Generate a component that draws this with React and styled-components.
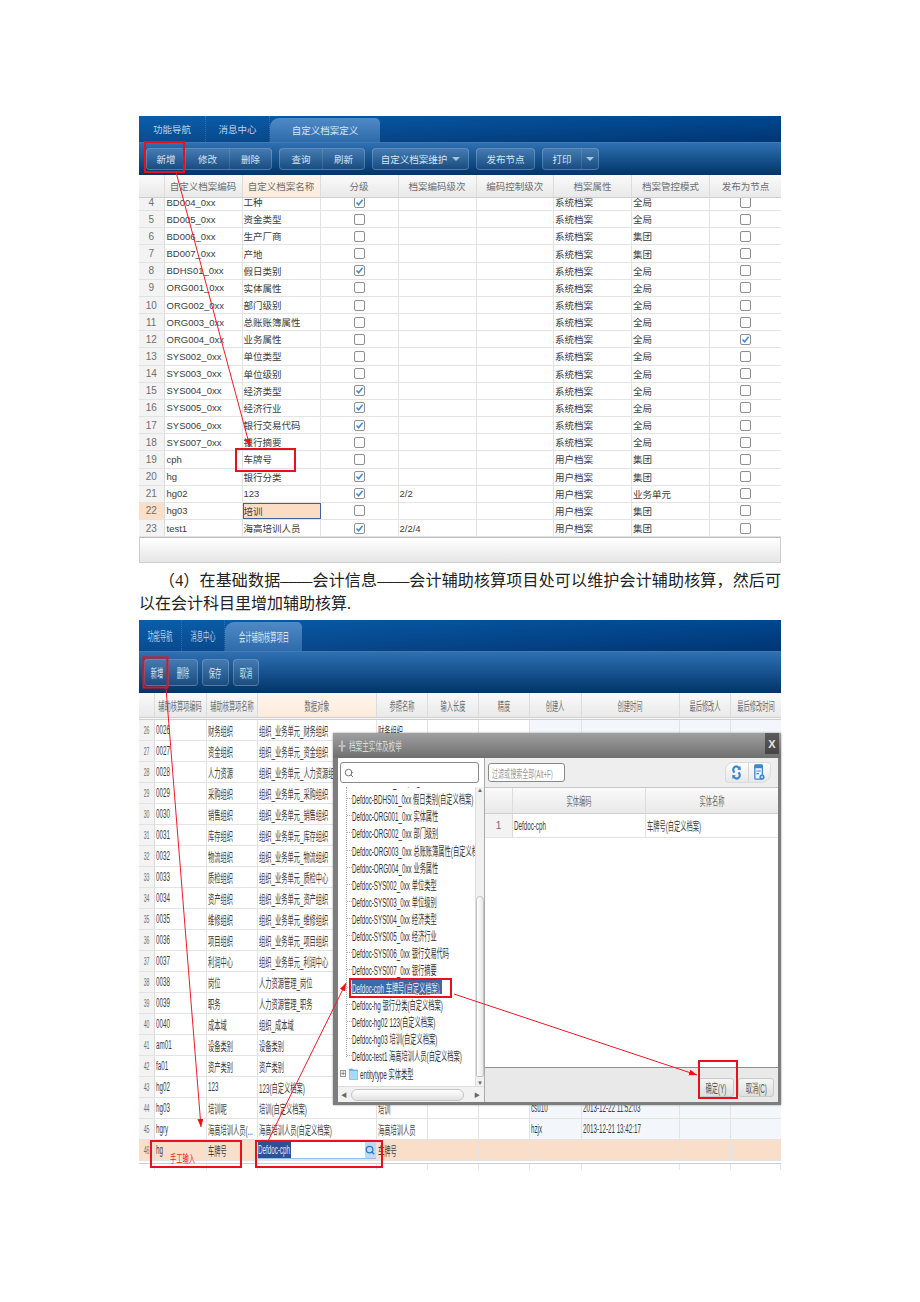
import styled, { createGlobalStyle } from "styled-components";
import { Search } from "lucide-react";

const GlobalStyle = createGlobalStyle`
  html, body {
    margin: 0;
    padding: 0;
    background: #fff;
  }
  * {
    box-sizing: border-box;
  }
`;

const SANS = `"Liberation Sans", "Noto Sans CJK SC", sans-serif`;

const Page = styled.div`
  position: relative;
  width: 920px;
  height: 1302px;
  padding: 116px 139px 0;
  overflow: hidden;
  font-family: ${SANS};
`;

const Panel = styled.section`
  position: relative;
  width: 642px;
  font-size: ${(p) => p.$size || 9.5}px;
`;

// second screenshot is squashed horizontally in the document
const Sq = styled.span`
  display: inline-block;
  flex-shrink: 0;
  white-space: nowrap;
  transform: scaleX(${(p) => p.$x || 0.52});
  transform-origin: ${(p) => (p.$left ? "left center" : "center")};
`;

const TabStrip = styled.div`
  display: flex;
  align-items: flex-end;
  height: ${(p) => p.$h}px;
  background-image:
    linear-gradient(90deg, rgba(30, 105, 180, 0.35), rgba(0, 40, 100, 0.35)),
    linear-gradient(180deg, #0058a6 0%, #003c7c 100%);
`;

const Tab = styled.div`
  display: flex;
  align-items: center;
  justify-content: center;
  width: ${(p) => p.$w}px;
  height: 100%;
  color: #b9d3ea;
  border-right: 1px dotted rgba(255, 255, 255, 0.16);
`;

const ActiveTab = styled.div`
  display: flex;
  align-items: center;
  justify-content: center;
  width: ${(p) => p.$w}px;
  height: ${(p) => p.$h}px;
  color: #d6e7f5;
  background: linear-gradient(180deg, #4f8ac6 0%, #2e6bab 100%);
  border-radius: 9px 5px 0 0;
`;

const Toolbar = styled.div`
  display: flex;
  align-items: center;
  gap: ${(p) => p.$gap || 7}px;
  height: ${(p) => p.$h}px;
  padding-left: ${(p) => p.$pad}px;
  background: linear-gradient(180deg, #2f70b2 0%, #17548f 48%, #023468 100%);
  border-top: 1px solid #3f7ab5;
`;

const BtnGroup = styled.div`
  display: flex;
  height: ${(p) => p.$h}px;
  background: linear-gradient(180deg, rgba(255, 255, 255, 0.14), rgba(255, 255, 255, 0.07));
  border: 1px solid rgba(255, 255, 255, 0.2);
  border-radius: 4px;
`;

const Btn = styled.div`
  display: flex;
  align-items: center;
  justify-content: center;
  gap: 5px;
  width: ${(p) => p.$w}px;
  color: #d4e4f2;
  border-right: 1px solid rgba(255, 255, 255, 0.12);
  &:last-child {
    border-right: 0;
  }
`;

const Caret = styled.i`
  width: 0;
  height: 0;
  border-left: 4px solid transparent;
  border-right: 4px solid transparent;
  border-top: 4px solid #a9c6df;
`;

const HeaderRow = styled.div`
  display: grid;
  grid-template-columns: ${(p) => p.$cols};
  height: ${(p) => p.$h}px;
  background: linear-gradient(180deg, #fafafa 0%, #e9e9e9 100%);
  border-bottom: ${(p) => p.$bottom || "1px solid #cfcfcf"};
`;

const HeaderCell = styled.div`
  display: flex;
  align-items: center;
  justify-content: center;
  overflow: hidden;
  white-space: nowrap;
  color: #6e6e6e;
  background: ${(p) => (p.$hot ? "linear-gradient(180deg, #fff5ec, #fcebdc)" : "none")};
  border-right: 1px solid #dcdcdc;
  &:last-child {
    border-right: 0;
  }
`;

const GridBody = styled.div`
  height: ${(p) => p.$h}px;
  overflow: hidden;
  background: #fff;
`;

const Row = styled.div`
  display: grid;
  grid-template-columns: ${(p) => p.$cols};
  height: ${(p) => p.$h}px;
  margin-top: ${(p) => p.$shift || 0}px;
  background: ${(p) => (p.$hot ? "#f9dfca" : "#fff")};
  border-bottom: 1px solid #e3e3e3;
  color: #3c3c3c;
`;

const Num = styled.div`
  display: flex;
  align-items: center;
  justify-content: center;
  overflow: hidden;
  color: #6f6f6f;
  background: ${(p) => (p.$hot ? "#fbdfc9" : "#f3f3f3")};
  border-right: 1px solid #dcdcdc;
  font-size: 10px;
`;

const Cell = styled.div`
  display: flex;
  align-items: center;
  justify-content: ${(p) => (p.$center ? "center" : "flex-start")};
  padding-left: ${(p) => (p.$center ? 0 : p.$pad ?? 1)}px;
  overflow: hidden;
  white-space: nowrap;
  background: ${(p) => (p.$tint ? "#f3f6fb" : "transparent")};
  border-right: 1px solid #e3e3e3;
  &:last-child {
    border-right: 0;
  }
`;

const EditingCell = styled(Cell)`
  padding-left: 0;
  background: #fbdcc5;
  border: 1px solid #3f5f9e;
`;

const Box = styled.span`
  display: flex;
  align-items: center;
  justify-content: center;
  width: 11px;
  height: 11px;
  background: #fff;
  border: 1px solid #8f8f8f;
  border-radius: 2px;
`;

const GridFooter = styled.div`
  height: 26px;
  background: linear-gradient(180deg, #ffffff 0%, #e6e6e6 100%);
  border: 1px solid #cfcfcf;
  border-top: 1px solid #bdbdbd;
`;

const Para = styled.p`
  margin: 6px 0 5px;
  font-family: "Liberation Serif", "Noto Sans CJK SC", serif;
  font-size: 16px;
  line-height: 23px;
  color: #222;
  text-align: justify;
  text-indent: 20px;
`;

const InputCell = styled.div`
  display: flex;
  flex: 1;
  align-items: stretch;
  height: 17px;
  background: #fff;
  border-bottom: 1px solid #8fbdec;
`;

const Selected = styled.span`
  display: flex;
  align-items: center;
  width: 33px;
  background: #2f4f9a;
  color: #dfe8f7;
`;

const Lookup = styled.span`
  display: flex;
  align-items: center;
  justify-content: center;
  width: 11px;
  margin-left: auto;
  background: #bcd9f6;
  color: #2a78c8;
`;

const GridEnd = styled.div`
  display: grid;
  grid-template-columns: ${(p) => p.$cols};
  height: 7px;
  margin-top: 2px;
  border-top: 1px solid #cfcfcf;
`;

const EndTick = styled.div`
  border-right: 1px solid #e6e6e6;
`;

/* dialog floats over the second grid */
const Dialog = styled.div`
  position: absolute;
  top: 113px;
  left: 194px;
  display: flex;
  flex-direction: column;
  width: 448px;
  height: 372px;
  padding: 0 3px 3px 5px;
  background: #7d7d7d;
  box-shadow: 0 0 2px rgba(0, 0, 0, 0.4);
`;

const DialogTitle = styled.div`
  display: flex;
  align-items: center;
  gap: 3px;
  height: 25px;
  margin: 0 -3px 0 -5px;
  padding-left: 5px;
  color: #dcdcdc;
  font-size: 12px;
  background: linear-gradient(180deg, #a0a0a0 0%, #6f6f6f 100%);
`;

const CloseBtn = styled.span`
  display: flex;
  align-items: center;
  justify-content: center;
  width: 14px;
  height: 21px;
  margin: 0 2px 4px auto;
  color: #e6e6e6;
  font-size: 11px;
  font-weight: 700;
  background: linear-gradient(180deg, #5c5c5c, #444);
`;

const DialogBody = styled.div`
  display: flex;
  flex: 1;
  min-height: 0;
  background: #e9e9e9;
`;

const LeftPane = styled.div`
  display: flex;
  flex-direction: column;
  width: 147px;
  background: #fff;
  border-right: 1px solid #aaa;
`;

const SearchRow = styled.div`
  height: 29px;
  padding: 4px 5px 4px 2px;
`;

const SearchBox = styled.div`
  display: flex;
  align-items: center;
  height: 21px;
  padding-left: 3px;
  color: #777;
  background: #fff;
  border: 1px solid #8a8a8a;
  border-radius: 3px;
`;

const TreeWrap = styled.div`
  display: flex;
  flex: 1;
  min-height: 0;
`;

const Tree = styled.div`
  position: relative;
  flex: 1;
  overflow: hidden;
  padding-top: 2px;
  font-size: 12px;
  color: #333;
`;

const Guide = styled.i`
  position: absolute;
  top: 0;
  left: 8px;
  height: 270px;
  border-left: 1px dotted #aaa;
`;

const TreeItem = styled.div`
  display: flex;
  align-items: center;
  height: 17.13px;
  margin-top: ${(p) => p.$shift || 0}px;
  padding-left: 9px;
  &::before {
    content: "";
    flex-shrink: 0;
    width: 5px;
    border-top: 1px dotted #aaa;
  }
`;

const TreeLabel = styled.span`
  display: flex;
  align-items: center;
  width: ${(p) => (p.$on ? "90px" : "auto")};
  height: 14px;
  color: ${(p) => (p.$on ? "#e3ebf6" : "inherit")};
  background: ${(p) => (p.$on ? "#3c6aa6" : "transparent")};
`;

const RootItem = styled.div`
  display: flex;
  align-items: center;
  gap: 2px;
  height: 18px;
  padding-left: 2px;
`;

const Plus = styled.span`
  display: flex;
  align-items: center;
  justify-content: center;
  width: 6px;
  height: 7px;
  margin-right: 1px;
  font-size: 7px;
  line-height: 1;
  color: #555;
  background: #eee;
  border: 1px solid #999;
`;

const VScroll = styled.div`
  display: flex;
  flex-direction: column;
  align-items: center;
  justify-content: space-between;
  width: 9px;
  color: #666;
  font-size: 6px;
  background: #f1f1f1;
  border-left: 1px solid #ddd;
`;

const VThumb = styled.div`
  flex: 1;
  width: 100%;
  margin: 103px 0 3px;
  background: linear-gradient(90deg, #fff, #e8e8e8);
  border: 1px solid #c4c4c4;
  border-radius: 6px 6px 3px 3px;
`;

const HScroll = styled.div`
  display: flex;
  align-items: center;
  height: 16px;
  padding: 0 3px;
  color: #666;
  font-size: 6px;
  background: #f1f1f1;
  border-top: 1px solid #ddd;
`;

const HThumb = styled.div`
  width: 113px;
  height: 12px;
  margin: 0 10px 0 4px;
  background: linear-gradient(180deg, #fff, #e2e2e2);
  border: 1px solid #c4c4c4;
  border-radius: 6px;
`;

const RightPane = styled.div`
  display: flex;
  flex: 1;
  flex-direction: column;
  min-width: 0;
`;

const RightBar = styled.div`
  display: flex;
  align-items: center;
  justify-content: space-between;
  height: 30px;
  padding: 0 7px 0 3px;
  background: #eee;
  border-bottom: 1px solid #c6c6c6;
`;

const FilterBox = styled.div`
  display: flex;
  align-items: center;
  width: 77px;
  height: 19px;
  padding-left: 3px;
  color: #999;
  background: #fff;
  border: 1px solid #8a8a8a;
  border-radius: 3px;
  font-size: 11px;
`;

const IconGroup = styled.div`
  display: flex;
  width: 46px;
  height: 21px;
  background: linear-gradient(180deg, #fdfdfd, #e8e8e8);
  border: 1px solid #dcdcdc;
  border-radius: 8px 3px 10px 3px;
`;

const IconCell = styled.span`
  display: flex;
  flex: 1;
  align-items: center;
  justify-content: center;
  border-right: 1px solid #d6d6d6;
  &:last-child {
    border-right: 0;
  }
`;

const EntityBody = styled.div`
  flex: 1;
  background: #fff;
  font-size: 12px;
`;

const DialogActions = styled.div`
  display: flex;
  justify-content: flex-end;
  align-items: center;
  gap: 4px;
  height: 35px;
  padding: 4px 4px 0 0;
  background: #e9e9e9;
  border-top: 1px solid #8f8f8f;
`;

const ActionBtn = styled.div`
  display: flex;
  align-items: center;
  justify-content: center;
  width: 36px;
  height: 19px;
  color: #555;
  font-size: 12px;
  background: linear-gradient(180deg, #f6f6f6, #dedede);
  border: 1px solid #c9c9c9;
  border-radius: 3px;
`;

const Overlay = styled.svg`
  position: absolute;
  top: 0;
  left: 0;
  pointer-events: none;
`;

const HandNote = styled.span`
  position: absolute;
  left: 170px;
  top: 1150px;
  color: #ee2222;
  font-size: 11px;
`;

const COLS_A = "25.5px 78px 78px 78px 78px 77.5px 78px 78px 1fr";
const COLS_B = "16px 51.5px 51.5px 118.5px 51.5px 51px 51px 51.5px 98px 51px 1fr";
const COLS_C = "28px 133px 1fr";

const rowsA = [
  [4, "BD004_0xx", "工种", 1, "", "系统档案", "全局", 0],
  [5, "BD005_0xx", "资金类型", 0, "", "系统档案", "全局", 0],
  [6, "BD006_0xx", "生产厂商", 0, "", "系统档案", "集团", 0],
  [7, "BD007_0xx", "产地", 0, "", "系统档案", "集团", 0],
  [8, "BDHS01_0xx", "假日类别", 1, "", "系统档案", "全局", 0],
  [9, "ORG001_0xx", "实体属性", 0, "", "系统档案", "全局", 0],
  [10, "ORG002_0xx", "部门级别", 0, "", "系统档案", "全局", 0],
  [11, "ORG003_0xx", "总账账簿属性", 0, "", "系统档案", "全局", 0],
  [12, "ORG004_0xx", "业务属性", 0, "", "系统档案", "全局", 1],
  [13, "SYS002_0xx", "单位类型", 0, "", "系统档案", "全局", 0],
  [14, "SYS003_0xx", "单位级别", 0, "", "系统档案", "全局", 0],
  [15, "SYS004_0xx", "经济类型", 1, "", "系统档案", "全局", 0],
  [16, "SYS005_0xx", "经济行业", 1, "", "系统档案", "全局", 0],
  [17, "SYS006_0xx", "银行交易代码", 1, "", "系统档案", "全局", 0],
  [18, "SYS007_0xx", "银行摘要", 0, "", "系统档案", "全局", 0],
  [19, "cph", "车牌号", 0, "", "用户档案", "集团", 0],
  [20, "hg", "银行分类", 1, "", "用户档案", "集团", 0],
  [21, "hg02", "123", 1, "2/2", "用户档案", "业务单元", 0],
  [22, "hg03", "培训", 0, "", "用户档案", "集团", 0],
  [23, "test1", "海高培训人员", 1, "2/2/4", "用户档案", "集团", 0],
];

const rowsB = [
  [26, "0026", "财务组织", "组织_业务单元_财务组织", "财务组织"],
  [27, "0027", "资金组织", "组织_业务单元_资金组织"],
  [28, "0028", "人力资源", "组织_业务单元_人力资源组织"],
  [29, "0029", "采购组织", "组织_业务单元_采购组织"],
  [30, "0030", "销售组织", "组织_业务单元_销售组织"],
  [31, "0031", "库存组织", "组织_业务单元_库存组织"],
  [32, "0032", "物流组织", "组织_业务单元_物流组织"],
  [33, "0033", "质检组织", "组织_业务单元_质检中心"],
  [34, "0034", "资产组织", "组织_业务单元_资产组织"],
  [35, "0035", "维修组织", "组织_业务单元_维修组织"],
  [36, "0036", "项目组织", "组织_业务单元_项目组织"],
  [37, "0037", "利润中心", "组织_业务单元_利润中心"],
  [38, "0038", "岗位", "人力资源管理_岗位"],
  [39, "0039", "职务", "人力资源管理_职务"],
  [40, "0040", "成本域", "组织_成本域"],
  [41, "am01", "设备类别", "设备类别"],
  [42, "fa01", "资产类别", "资产类别"],
  [43, "hg02", "123", "123(自定义档案)"],
  [44, "hg03", "培训呢", "培训(自定义档案)", "培训", "csu10", "2013-12-22 11:52:03"],
  [45, "hgry", "海高培训人员(...", "海高培训人员(自定义档案)", "海高培训人员", "hzjx", "2013-12-21 13:42:17"],
];

const headersA = ["", "自定义档案编码", "自定义档案名称", "分级", "档案编码级次", "编码控制级次", "档案属性", "档案管控模式", "发布为节点"];
const headersB = ["", "辅助核算项编码", "辅助核算项名称", "数据对象", "参照名称", "输入长度", "精度", "创建人", "创建时间", "最后修改人", "最后修改时间"];

const treeItems = [
  "Defdoc-BDHS01_0xx 假日类别(自定义档案)",
  "Defdoc-ORG001_0xx 实体属性",
  "Defdoc-ORG002_0xx 部门级别",
  "Defdoc-ORG003_0xx 总账账簿属性(自定义档案)",
  "Defdoc-ORG004_0xx 业务属性",
  "Defdoc-SYS002_0xx 单位类型",
  "Defdoc-SYS003_0xx 单位级别",
  "Defdoc-SYS004_0xx 经济类型",
  "Defdoc-SYS005_0xx 经济行业",
  "Defdoc-SYS006_0xx 银行交易代码",
  "Defdoc-SYS007_0xx 银行摘要",
  "Defdoc-cph 车牌号(自定义档案)",
  "Defdoc-hg 银行分类(自定义档案)",
  "Defdoc-hg02 123(自定义档案)",
  "Defdoc-hg03 培训(自定义档案)",
  "Defdoc-test1 海高培训人员(自定义档案)",
];

function CheckBox({ on }) {
  return (
    <Box>
      {on ? (
        <svg width="9" height="9" viewBox="0 0 9 9">
          <path d="M1.5 4.6 L3.6 6.8 L7.6 1.8" fill="none" stroke="#3f86d8" strokeWidth="1.5" />
        </svg>
      ) : null}
    </Box>
  );
}

function RefreshGlyph() {
  return (
    <svg width="9" height="17" viewBox="0 0 9 17">
      <path d="M7.5 5 C7 2.4 3.6 1.6 2 3.6 C0.9 5 1.2 7 2.4 8.6" fill="none" stroke="#3d88cc" strokeWidth="2.2" />
      <path d="M5.2 5.6 L8.8 6.2 L8.4 1.8 Z" fill="#3d88cc" />
      <path d="M1.5 12 C2 14.6 5.4 15.4 7 13.4 C8.1 12 7.8 10 6.6 8.4" fill="none" stroke="#3d88cc" strokeWidth="2.2" />
      <path d="M3.8 11.4 L0.2 10.8 L0.6 15.2 Z" fill="#3d88cc" />
    </svg>
  );
}

function DocGlyph() {
  return (
    <svg width="11" height="17" viewBox="0 0 11 17">
      <rect x="0.8" y="0.8" width="7.6" height="14.4" rx="1" fill="#eaf3fb" stroke="#3d88cc" strokeWidth="1.3" />
      <rect x="0.8" y="0.8" width="7.6" height="3.4" fill="#3d88cc" />
      <path d="M2.4 7 H6.8 M2.4 9.6 H5" stroke="#3d88cc" strokeWidth="1.2" />
      <circle cx="8" cy="13" r="2.6" fill="#3d88cc" />
      <circle cx="8" cy="13" r="0.9" fill="#eaf3fb" />
    </svg>
  );
}

function FolderGlyph() {
  return (
    <svg width="9" height="13" viewBox="0 0 9 13">
      <path d="M0.5 2 H3.5 L4.5 3 H8.5 V12.5 H0.5 Z" fill="#6db6ef" stroke="#5a9fd6" strokeWidth="0.6" />
      <rect x="0.5" y="4" width="8" height="8.5" fill="#a9d8fa" />
    </svg>
  );
}

function PinGlyph() {
  return (
    <svg width="8" height="12" viewBox="0 0 8 12">
      <path d="M4 0.5 V11.5 M0.5 6 H7.5" stroke="#bdbdbd" strokeWidth="2" />
    </svg>
  );
}

function Annotations() {
  return (
    <Overlay width="920" height="1302" viewBox="0 0 920 1302">
      <defs>
        <marker id="head" markerWidth="10" markerHeight="10" refX="8" refY="3" orient="auto">
          <path d="M0 0 L8 3 L0 6 Z" fill="#f01010" />
        </marker>
      </defs>
      <g fill="none" stroke="#e8101c" strokeWidth="2">
        <rect x="145" y="142" width="39" height="30" />
        <rect x="236" y="449" width="59" height="22" />
        <rect x="143.5" y="657.5" width="24" height="30" />
        <rect x="350" y="979" width="101" height="18" />
        <rect x="699" y="1061" width="38" height="37" />
        <rect x="151" y="1141" width="90" height="26" />
        <rect x="256" y="1141" width="126" height="26" />
      </g>
      <g stroke="#f01a2a" strokeWidth="1" fill="none">
        <line x1="176" y1="172" x2="250" y2="447" markerEnd="url(#head)" />
        <line x1="166" y1="688" x2="201" y2="1127" markerEnd="url(#head)" />
        <line x1="268" y1="1141" x2="346" y2="983" markerEnd="url(#head)" />
        <line x1="454" y1="994" x2="697" y2="1075" markerEnd="url(#head)" />
      </g>
      <ellipse cx="423" cy="988" rx="17" ry="6.5" fill="none" stroke="#e8101c" strokeWidth="0.8" strokeDasharray="3 1" />
    </Overlay>
  );
}

export default function App() {
  return (
    <>
      <GlobalStyle />
      <Page>
        <Panel>
          <TabStrip $h={26}>
            <Tab $w={67}>功能导航</Tab>
            <Tab $w={64}>消息中心</Tab>
            <ActiveTab $w={110} $h={24}>自定义档案定义</ActiveTab>
          </TabStrip>
          <Toolbar $h={33} $pad={7}>
            <BtnGroup $h={22}>
              <Btn $w={39}>新增</Btn>
              <Btn $w={44}>修改</Btn>
              <Btn $w={41}>删除</Btn>
            </BtnGroup>
            <BtnGroup $h={22}>
              <Btn $w={43}>查询</Btn>
              <Btn $w={41}>刷新</Btn>
            </BtnGroup>
            <BtnGroup $h={22}>
              <Btn $w={95}>
                自定义档案维护 <Caret />
              </Btn>
            </BtnGroup>
            <BtnGroup $h={22}>
              <Btn $w={57}>发布节点</Btn>
            </BtnGroup>
            <BtnGroup $h={22}>
              <Btn $w={39}>打印</Btn>
              <Btn $w={16}>
                <Caret />
              </Btn>
            </BtnGroup>
          </Toolbar>
          <HeaderRow $cols={COLS_A} $h={23}>
            {headersA.map((h, i) => (
              <HeaderCell key={i} $hot={i === 2}>
                {h}
              </HeaderCell>
            ))}
          </HeaderRow>
          <GridBody $h={339}>
            {rowsA.map((r, i) => {
              const hot = r[0] === 22;
              return (
                <Row key={r[0]} $cols={COLS_A} $h={17.17} $shift={i === 0 ? -4 : 0}>
                  <Num $hot={hot}>{r[0]}</Num>
                  <Cell $pad={2}>{r[1]}</Cell>
                  {hot ? <EditingCell>{r[2]}</EditingCell> : <Cell $pad={1}>{r[2]}</Cell>}
                  <Cell $center>
                    <CheckBox on={r[3]} />
                  </Cell>
                  <Cell>{r[4]}</Cell>
                  <Cell />
                  <Cell>{r[5]}</Cell>
                  <Cell>{r[6]}</Cell>
                  <Cell $center>
                    <CheckBox on={r[7]} />
                  </Cell>
                </Row>
              );
            })}
          </GridBody>
          <GridFooter />
        </Panel>

        <Para>
          （4）在基础数据––––会计信息––––会计辅助核算项目处可以维护会计辅助核算，然后可以在会计科目里增加辅助核算.
        </Para>

        <Panel $size={12}>
          <TabStrip $h={31}>
            <Tab $w={43}>
              <Sq>功能导航</Sq>
            </Tab>
            <Tab $w={43}>
              <Sq>消息中心</Sq>
            </Tab>
            <ActiveTab $w={77} $h={29}>
              <Sq>会计辅助核算项目</Sq>
            </ActiveTab>
          </TabStrip>
          <Toolbar $h={42} $pad={5} $gap={4}>
            <BtnGroup $h={27}>
              <Btn $w={24}>
                <Sq>新增</Sq>
              </Btn>
              <Btn $w={28}>
                <Sq>删除</Sq>
              </Btn>
            </BtnGroup>
            <BtnGroup $h={27}>
              <Btn $w={25}>
                <Sq>保存</Sq>
              </Btn>
            </BtnGroup>
            <BtnGroup $h={27}>
              <Btn $w={24}>
                <Sq>取消</Sq>
              </Btn>
            </BtnGroup>
          </Toolbar>
          <HeaderRow $cols={COLS_B} $h={27} $bottom="3px double #cfcfcf">
            {headersB.map((h, i) => (
              <HeaderCell key={i} $hot={i === 3}>
                {h ? <Sq>{h}</Sq> : null}
              </HeaderCell>
            ))}
          </HeaderRow>
          <GridBody $h={441}>
            {rowsB.map((r) => (
              <Row key={r[0]} $cols={COLS_B} $h={21}>
                <Num>
                  <Sq>{r[0]}</Sq>
                </Num>
                <Cell>
                  <Sq $left>{r[1]}</Sq>
                </Cell>
                <Cell>
                  <Sq $left>{r[2]}</Sq>
                </Cell>
                <Cell>
                  <Sq $left>{r[3]}</Sq>
                </Cell>
                <Cell>
                  <Sq $left>{r[4]}</Sq>
                </Cell>
                <Cell />
                <Cell />
                <Cell $tint>
                  <Sq $left>{r[5]}</Sq>
                </Cell>
                <Cell $tint>
                  <Sq $left>{r[6]}</Sq>
                </Cell>
                <Cell $tint />
                <Cell $tint />
              </Row>
            ))}
            <Row $cols={COLS_B} $h={21} $hot>
              <Num $hot>
                <Sq>46</Sq>
              </Num>
              <Cell>
                <Sq $left>hg</Sq>
              </Cell>
              <Cell>
                <Sq $left>车牌号</Sq>
              </Cell>
              <Cell $pad={0}>
                <InputCell>
                  <Selected>
                    <Sq $left>Defdoc-cph</Sq>
                  </Selected>
                  <Lookup>
                    <Search size={10} strokeWidth={3} />
                  </Lookup>
                </InputCell>
              </Cell>
              <Cell>
                <Sq $left>车牌号</Sq>
              </Cell>
              <Cell />
              <Cell />
              <Cell />
              <Cell />
              <Cell />
              <Cell />
            </Row>
          </GridBody>
          <GridEnd $cols={COLS_B}>
            {headersB.map((h, i) => (
              <EndTick key={i} />
            ))}
          </GridEnd>

          <Dialog>
            <DialogTitle>
              <PinGlyph />
              <Sq $left $x={0.55}>档案主实体及枚举</Sq>
              <CloseBtn>X</CloseBtn>
            </DialogTitle>
            <DialogBody>
              <LeftPane>
                <SearchRow>
                  <SearchBox>
                    <Search size={10} strokeWidth={2.4} />
                  </SearchBox>
                </SearchRow>
                <TreeWrap>
                  <Tree>
                    <Guide />
                    <TreeItem $shift={-16}>
                      <Sq $left>Defdoc-BD007_0xx 产地</Sq>
                    </TreeItem>
                    {treeItems.map((t, i) => (
                      <TreeItem key={t}>
                        <TreeLabel $on={i === 11}>
                          <Sq $left>{t}</Sq>
                        </TreeLabel>
                      </TreeItem>
                    ))}
                    <RootItem>
                      <Plus>+</Plus>
                      <FolderGlyph />
                      <Sq $left>entitytype 实体类型</Sq>
                    </RootItem>
                  </Tree>
                  <VScroll>
                    <span>▲</span>
                    <VThumb />
                    <span>▼</span>
                  </VScroll>
                </TreeWrap>
                <HScroll>
                  <span>◀</span>
                  <HThumb />
                  <span>▶</span>
                </HScroll>
              </LeftPane>
              <RightPane>
                <RightBar>
                  <FilterBox>
                    <Sq $left $x={0.55}>过滤或搜索全部(Alt+F)</Sq>
                  </FilterBox>
                  <IconGroup>
                    <IconCell>
                      <RefreshGlyph />
                    </IconCell>
                    <IconCell>
                      <DocGlyph />
                    </IconCell>
                  </IconGroup>
                </RightBar>
                <HeaderRow $cols={COLS_C} $h={26}>
                  <HeaderCell />
                  <HeaderCell>
                    <Sq>实体编码</Sq>
                  </HeaderCell>
                  <HeaderCell>
                    <Sq>实体名称</Sq>
                  </HeaderCell>
                </HeaderRow>
                <EntityBody>
                  <Row $cols={COLS_C} $h={24}>
                    <Num>1</Num>
                    <Cell>
                      <Sq $left>Defdoc-cph</Sq>
                    </Cell>
                    <Cell>
                      <Sq $left>车牌号(自定义档案)</Sq>
                    </Cell>
                  </Row>
                </EntityBody>
                <DialogActions>
                  <ActionBtn>
                    <Sq>确定(Y)</Sq>
                  </ActionBtn>
                  <ActionBtn>
                    <Sq>取消(C)</Sq>
                  </ActionBtn>
                </DialogActions>
              </RightPane>
            </DialogBody>
          </Dialog>
        </Panel>

        <Annotations />
        <HandNote>
          <Sq $left $x={0.57}>手工输入</Sq>
        </HandNote>
      </Page>
    </>
  );
}
